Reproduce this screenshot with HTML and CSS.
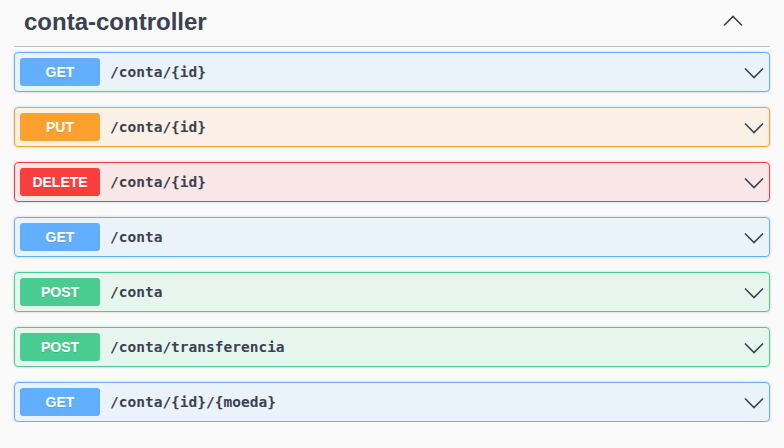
FILE: index.html
```html
<!DOCTYPE html>
<html>
<head>
<meta charset="utf-8">
<link rel="stylesheet" href="styles.css">
</head>
<body>
<div class="section">
  <div class="tag">
    <h3 class="tag-title">conta-controller</h3>
    <svg class="chev-up" width="20" height="20" viewBox="0 0 20 20"><path d="M1 14.5 L10 5.5 L19 14.5" fill="none" stroke="#3b4151" stroke-width="1.6"/></svg>
  </div>
  <div class="ops">
    <div class="op get"><span class="method">GET</span><span class="path">/conta/{id}</span><svg class="chev" width="20" height="20" viewBox="0 0 20 20"><path d="M1 5.5 L10 14.5 L19 5.5" fill="none" stroke="#3b4151" stroke-width="1.6"/></svg></div>
    <div class="op put"><span class="method">PUT</span><span class="path">/conta/{id}</span><svg class="chev" width="20" height="20" viewBox="0 0 20 20"><path d="M1 5.5 L10 14.5 L19 5.5" fill="none" stroke="#3b4151" stroke-width="1.6"/></svg></div>
    <div class="op delete"><span class="method">DELETE</span><span class="path">/conta/{id}</span><svg class="chev" width="20" height="20" viewBox="0 0 20 20"><path d="M1 5.5 L10 14.5 L19 5.5" fill="none" stroke="#3b4151" stroke-width="1.6"/></svg></div>
    <div class="op get"><span class="method">GET</span><span class="path">/conta</span><svg class="chev" width="20" height="20" viewBox="0 0 20 20"><path d="M1 5.5 L10 14.5 L19 5.5" fill="none" stroke="#3b4151" stroke-width="1.6"/></svg></div>
    <div class="op post"><span class="method">POST</span><span class="path">/conta</span><svg class="chev" width="20" height="20" viewBox="0 0 20 20"><path d="M1 5.5 L10 14.5 L19 5.5" fill="none" stroke="#3b4151" stroke-width="1.6"/></svg></div>
    <div class="op post"><span class="method">POST</span><span class="path">/conta/transferencia</span><svg class="chev" width="20" height="20" viewBox="0 0 20 20"><path d="M1 5.5 L10 14.5 L19 5.5" fill="none" stroke="#3b4151" stroke-width="1.6"/></svg></div>
    <div class="op get"><span class="method">GET</span><span class="path">/conta/{id}/{moeda}</span><svg class="chev" width="20" height="20" viewBox="0 0 20 20"><path d="M1 5.5 L10 14.5 L19 5.5" fill="none" stroke="#3b4151" stroke-width="1.6"/></svg></div>
  </div>
</div>
</body>
</html>
```
FILE: styles.css
```css
html, body {
  margin: 0;
  padding: 0;
  background: #fafafa;
  font-family: "Liberation Sans", Arial, sans-serif;
  color: #3b4151;
}
.section {
  padding: 0 14px;
}
.tag {
  display: flex;
  align-items: center;
  justify-content: space-between;
  height: 47px;
  border-bottom: 1px solid rgba(59, 65, 81, 0.3);
  padding: 0 27px 0 10px;
  box-sizing: border-box;
}
.tag-title {
  margin: 0;
  font-size: 24px;
  font-weight: bold;
  line-height: 1;
  margin-top: -3px;
}
.chev-up {
  margin-top: -4px;
}
.ops {
  display: flex;
  flex-direction: column;
  gap: 15px;
  padding-top: 5px;
}
.op {
  display: flex;
  align-items: center;
  height: 40px;
  box-sizing: border-box;
  padding: 5px;
  border: 1px solid;
  border-radius: 4px;
  box-shadow: 0 0 3px rgba(0, 0, 0, 0.19);
}
.method {
  width: 80px;
  height: 28px;
  display: flex;
  align-items: center;
  justify-content: center;
  border-radius: 3px;
  color: #fff;
  font-weight: bold;
  font-size: 14px;
  text-shadow: 0 1px 0 rgba(0,0,0,0.1);
}
.path {
  flex: 1;
  padding-left: 10px;
  font-family: "DejaVu Sans Mono", "Liberation Mono", monospace;
  font-weight: bold;
  font-size: 14.5px;
  color: #3b4151;
}
.chev {
  margin-right: 0;
  margin-top: 1px;
}
.get { background: rgba(97, 175, 254, 0.1); border-color: #61affe; }
.get .method { background: #61affe; }
.put { background: rgba(252, 161, 48, 0.1); border-color: #fca130; }
.put .method { background: #fca130; }
.delete { background: rgba(249, 62, 62, 0.1); border-color: #f93e3e; }
.delete .method { background: #f93e3e; }
.post { background: rgba(73, 204, 144, 0.1); border-color: #49cc90; }
.post .method { background: #49cc90; }
```
